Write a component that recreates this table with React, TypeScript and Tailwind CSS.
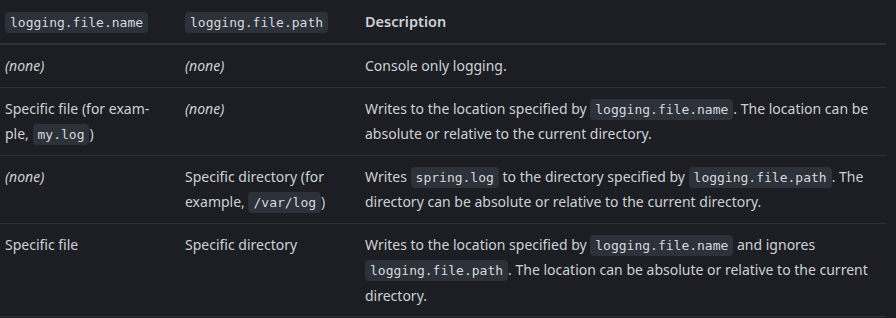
import type { ReactNode } from "react";

const Code = ({ children }: { children: ReactNode }) => (
  <code className="rounded-[4px] bg-[#2d3139] px-[5px] py-[3px] font-['DejaVu_Sans_Mono',monospace] text-[13px] leading-none text-[#d6d9de]">
    {children}
  </code>
);

type Row = { name: ReactNode; path: ReactNode; desc: ReactNode };

const rows: Row[] = [
  {
    name: <em>(none)</em>,
    path: <em>(none)</em>,
    desc: "Console only logging.",
  },
  {
    name: (
      <>
        Specific file (for exam{"\u00AD"}ple, <Code>my.log</Code>)
      </>
    ),
    path: <em>(none)</em>,
    desc: (
      <>
        Writes to the location specified by <Code>logging.file.name</Code>. The location can be
        absolute or relative to the current directory.
      </>
    ),
  },
  {
    name: <em>(none)</em>,
    path: (
      <>
        Specific directory (for example, <Code>/var/log</Code>)
      </>
    ),
    desc: (
      <>
        Writes <Code>spring.log</Code> to the directory specified by <Code>logging.file.path</Code>.
        The directory can be absolute or relative to the current directory.
      </>
    ),
  },
  {
    name: "Specific file",
    path: "Specific directory",
    desc: (
      <>
        Writes to the location specified by <Code>logging.file.name</Code> and ignores{" "}
        <Code>logging.file.path</Code>. The location can be absolute or relative to the current
        directory.
      </>
    ),
  },
];

const App = () => {
  return (
    <div className="h-[318px] w-[896px] overflow-hidden bg-[#1c1e23] font-['Noto_Sans',sans-serif] text-[14px] leading-[25.5px] text-[#cdd1d6]">
      <table className="w-[886px] border-collapse text-left">
        <thead>
          <tr className="border-b-2 border-[#2f3238]">
            <th className="h-[44px] w-[180px] px-[5px] align-middle font-normal">
              <Code>logging.file.name</Code>
            </th>
            <th className="h-[44px] w-[180px] px-[5px] align-middle font-normal">
              <Code>logging.file.path</Code>
            </th>
            <th className="h-[44px] px-[5px] align-middle text-[14.5px] font-semibold">Description</th>
          </tr>
        </thead>
        <tbody>
          {rows.map((r, i) => (
            <tr key={i} className="border-b border-[#2f3238]">
              <td className="w-[180px] py-2 pl-[5px] pr-[18px] align-top">{r.name}</td>
              <td className="w-[180px] py-2 pl-[5px] pr-[8px] align-top">{r.path}</td>
              <td className="py-2 pl-[5px] pr-[10px] align-top">{r.desc}</td>
            </tr>
          ))}
        </tbody>
      </table>
    </div>
  );
};

export default App;
